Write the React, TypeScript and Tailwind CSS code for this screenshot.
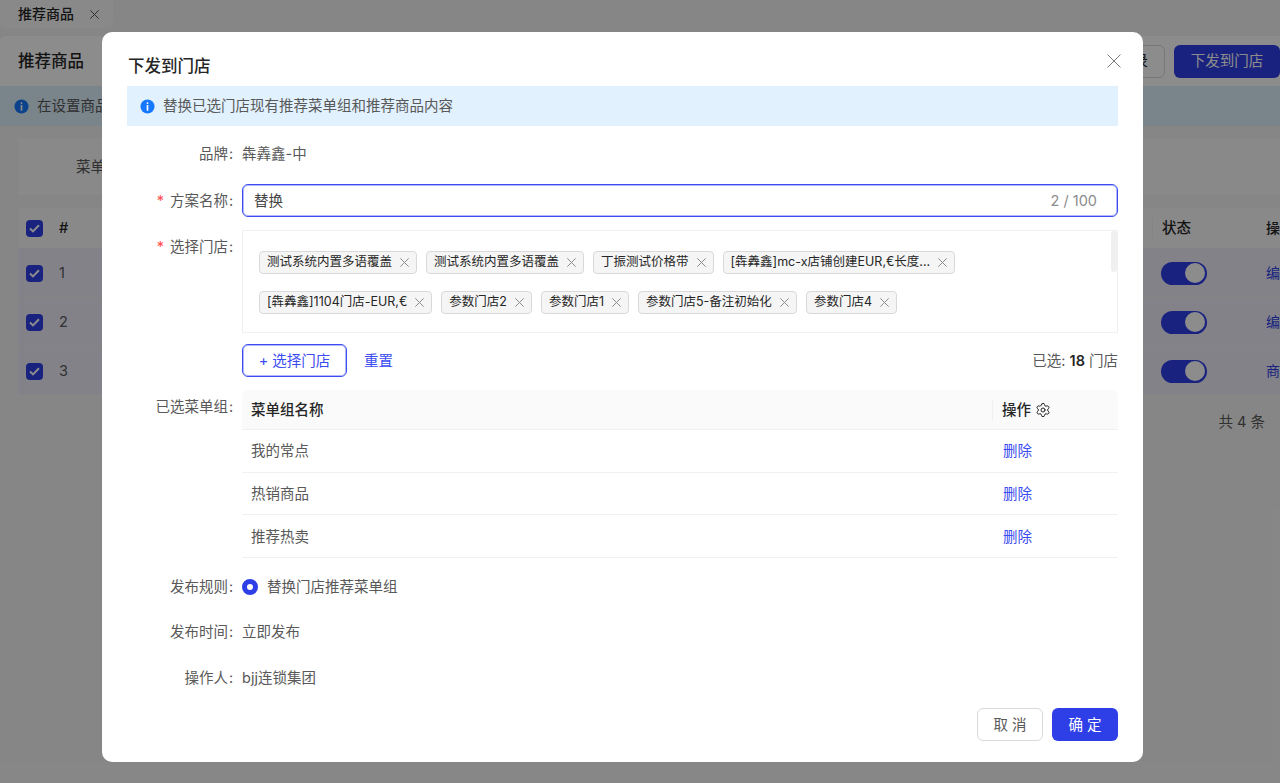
import { Settings } from 'lucide-react';

const FONT = "font-['Inter','Noto_Sans_CJK_SC',sans-serif]";

const row1 = ['测试系统内置多语覆盖', '测试系统内置多语覆盖', '丁振测试价格带', '[犇羴鑫]mc-x店铺创建EUR,€长度...'];
const row2 = ['[犇羴鑫]1104门店-EUR,€', '参数门店2', '参数门店1', '参数门店5-备注初始化', '参数门店4'];
const groups = ['我的常点', '热销商品', '推荐热卖'];

function InfoIcon({ className }: { className: string }) {
  return (
    <svg className={className} viewBox="0 0 16 16">
      <circle cx="8" cy="8" r="7.5" fill="currentColor" />
      <rect x="7.1" y="3.4" width="1.8" height="1.9" rx="0.5" fill="#fff" />
      <rect x="7.1" y="6.5" width="1.8" height="6" rx="0.5" fill="#fff" />
    </svg>
  );
}

function Cross({ size, className }: { size: number; className: string }) {
  return (
    <svg className={className} width={size} height={size} viewBox="0 0 14 14" fill="none" stroke="currentColor" strokeWidth={14 / size}>
      <path d="M.5.5l13 13M13.5.5l-13 13" />
    </svg>
  );
}

function Check() {
  return (
    <span className="flex h-[17px] w-[17px] items-center justify-center rounded-[4px] bg-[#2f3fe8]">
      <svg width="11" height="9" viewBox="0 0 11 9" fill="none" stroke="#fff" strokeWidth="2">
        <path d="M1 4.5 4 7.4 10 1.2" />
      </svg>
    </span>
  );
}

function Toggle() {
  return (
    <span className="flex h-[23px] w-[46px] items-center justify-end rounded-full bg-[#2f3fe8] pr-[2px]">
      <span className="h-5 w-5 rounded-full bg-white" />
    </span>
  );
}

function Tag({ text }: { text: string }) {
  return (
    <span className="flex h-[23px] items-center gap-2 rounded-[4px] border border-[#d9d9d9] bg-[#f5f5f5] px-[7px] text-[12.5px] leading-none text-[#262626]">
      {text}
      <Cross size={9} className="text-[#8c8c8c]" />
    </span>
  );
}

function Label({ text, required, className = '' }: { text: string; required?: boolean; className?: string }) {
  return (
    <div className={`w-[132px] shrink-0 pr-2 text-right text-[#595959] ${className}`}>
      {required && <span className="mr-[6px] text-[#ff4d4f]">*</span>}
      {text}
      <span className="inline-block w-[6px] text-center">:</span>
    </div>
  );
}

function Background() {
  return (
    <div className="flex h-[783px] flex-col bg-[#f5f5f5] text-[14.5px] text-[#262626]">
      {/* Tab bar */}
      <div className="h-9 shrink-0">
        <div className="flex h-7 w-[113px] items-center gap-[16px] rounded-b-[6px] bg-[#fafafa] pl-[18px] text-sm font-medium">
          推荐商品
          <Cross size={9} className="text-[#595959]" />
        </div>
      </div>

      {/* Header */}
      <div className="flex h-[50px] shrink-0 items-center justify-between rounded-tl-[6px] bg-white pl-[18px]">
        <span className="text-[16.5px] font-medium">推荐商品</span>
        <div className="flex gap-[9px]">
          <span className="flex h-[33px] w-[60px] items-center justify-end rounded-[6px] border border-[#d9d9d9] pr-4">录</span>
          <span className="flex h-[33px] w-[106px] items-center justify-center rounded-[6px] bg-[#2f3fe8] text-white">下发到门店</span>
        </div>
      </div>

      {/* Notice */}
      <div className="flex h-10 shrink-0 items-center gap-2 bg-[#dff0fd] pl-[14px] text-[#595959]">
        <InfoIcon className="h-[15px] w-[15px] text-[#1677ff]" />
        在设置商品
      </div>

      {/* Filter */}
      <div className="ml-[18px] mt-3 flex h-[57px] shrink-0 items-center bg-[#fafafa] pl-[58px] text-[#595959]">菜单</div>

      {/* Table */}
      <div className="ml-[18px] mt-[13px]">
        <div className="flex h-10 items-center bg-[#fafafa] font-medium">
          <div className="w-[25px] pl-2"><Check /></div>
          <div className="ml-[16px] flex-1">#</div>
          <div className="flex h-[22px] w-[114px] items-center border-l border-[#f0f0f0] pl-[9px]">状态</div>
          <div className="w-[14px] overflow-hidden whitespace-nowrap text-sm">操</div>
        </div>
        {['编', '编', '商'].map((link, i) => (
          <div key={i} className="flex h-[49px] items-center border-b border-[#f0f0f0] bg-[#eeedf8] pt-[2px] last:border-b-0">
            <div className="w-[25px] pl-2"><Check /></div>
            <div className="ml-[16px] flex-1 text-[#595959]">{i + 1}</div>
            <div className="w-[114px] pl-[9px]"><Toggle /></div>
            <div className="w-[14px] overflow-hidden text-sm text-[#2f3fe8]">{link}</div>
          </div>
        ))}
        <div className="mt-4 pr-[15px] text-right text-[#595959]">共 4 条</div>
      </div>
    </div>
  );
}

function Dialog() {
  return (
    <div className="absolute left-[102px] top-8 flex h-[730px] w-[1041px] flex-col rounded-[10px] bg-white px-[25px] text-[14.5px] text-[#262626]">
      <Cross size={14} className="absolute right-[22px] top-[22px] text-[#7a7a7a]" />
      <div className="flex h-[54px] shrink-0 items-end pb-3 pl-px text-[16.5px] font-medium leading-none">下发到门店</div>

      <div className="flex h-10 shrink-0 items-center gap-2 bg-[#e1f1fe] pl-[13px] text-[#595959]">
        <InfoIcon className="h-[15px] w-[15px] text-[#1677ff]" />
        替换已选门店现有推荐菜单组和推荐商品内容
      </div>

      <div className="mt-[18px] flex h-[20px] shrink-0 items-center -ml-[17px]">
        <Label text="品牌" />
        <span className="text-[#595959]">犇羴鑫-中</span>
      </div>

      <div className="mt-5 flex shrink-0 items-center -ml-[17px]">
        <Label text="方案名称" required />
        <div className="flex h-[33px] flex-1 items-center justify-between rounded-[6px] border border-[#3b4cf0] pl-[11px] pr-[20px] shadow-[inset_0_0_0_1px_rgba(59,76,240,0.4)]">
          <span className="text-[#434343]">替换</span>
          <span className="text-[#8c8c8c]">2 / 100</span>
        </div>
      </div>

      <div className="mt-[13px] flex shrink-0 -ml-[17px]">
        <Label text="选择门店" required className="pt-[6px]" />
        <div className="relative flex h-[103px] flex-1 flex-col gap-[17px] border border-[#f0f0f0] pl-[16px] pt-[20px]">
          <div className="flex gap-[9px]">{row1.map((t, i) => <Tag key={i} text={t} />)}</div>
          <div className="flex gap-[9px]">{row2.map((t, i) => <Tag key={i} text={t} />)}</div>
          <span className="absolute right-0 top-0 h-[41px] w-[6px] rounded-[3px] bg-[#f0f0f0]" />
        </div>
      </div>

      <div className="mt-[11px] flex h-[33px] shrink-0 items-center pl-[115px]">
        <span className="flex h-[33px] w-[105px] items-center justify-center rounded-[6px] border border-[#3b4cf0] text-[#3b4cf0] shadow-[inset_0_0_0_1px_rgba(59,76,240,0.4)]">+ 选择门店</span>
        <span className="ml-[17px] text-[#3b4cf0]">重置</span>
        <span className="ml-auto text-[#595959]">已选: <b className="font-semibold text-[#262626]">18</b> 门店</span>
      </div>

      <div className="mt-[13px] flex shrink-0 -ml-[17px]">
        <Label text="已选菜单组" className="pt-[6px]" />
        <div className="flex-1">
          <div className="flex h-10 items-center rounded-t-[6px] border-b border-[#f0f0f0] bg-[#fafafa] font-medium">
            <div className="flex-1 pl-[9px]">菜单组名称</div>
            <div className="flex h-[22px] w-[126px] items-center gap-1 border-l border-[#f0f0f0] pl-[9px]">
              操作
              <Settings size={16} strokeWidth={1.5} />
            </div>
          </div>
          {groups.map((g) => (
            <div key={g} className="flex h-[42.67px] items-center border-b border-[#f0f0f0] pt-px text-[#595959]">
              <div className="flex-1 pl-[9px]">{g}</div>
              <div className="w-[125px] pl-[10px] text-[#3b4cf0]">删除</div>
            </div>
          ))}
        </div>
      </div>

      <div className="mt-[19px] flex h-5 shrink-0 items-center -ml-[17px]">
        <Label text="发布规则" />
        <span className="h-4 w-4 rounded-full border-[5px] border-[#2f3fe8] bg-white" />
        <span className="ml-[9px] text-[#595959]">替换门店推荐菜单组</span>
      </div>
      <div className="mt-[25px] flex h-5 shrink-0 items-center -ml-[17px]">
        <Label text="发布时间" />
        <span className="text-[#595959]">立即发布</span>
      </div>
      <div className="mt-[26px] flex h-5 shrink-0 items-center -ml-[17px]">
        <Label text="操作人" />
        <span className="text-[#595959]">bjj连锁集团</span>
      </div>

      <div className="mt-5 flex shrink-0 justify-end gap-[9px]">
        <span className="flex h-[33px] w-[66px] items-center justify-center rounded-[6px] border border-[#d9d9d9] text-[#595959]">取 消</span>
        <span className="flex h-[33px] w-[66px] items-center justify-center rounded-[6px] bg-[#2f3fe8] text-white">确 定</span>
      </div>
    </div>
  );
}

export default function App() {
  return (
    <div className={`relative h-[783px] overflow-hidden ${FONT}`}>
      <Background />
      <div className="absolute inset-0 bg-black/45" />
      <Dialog />
    </div>
  );
}
